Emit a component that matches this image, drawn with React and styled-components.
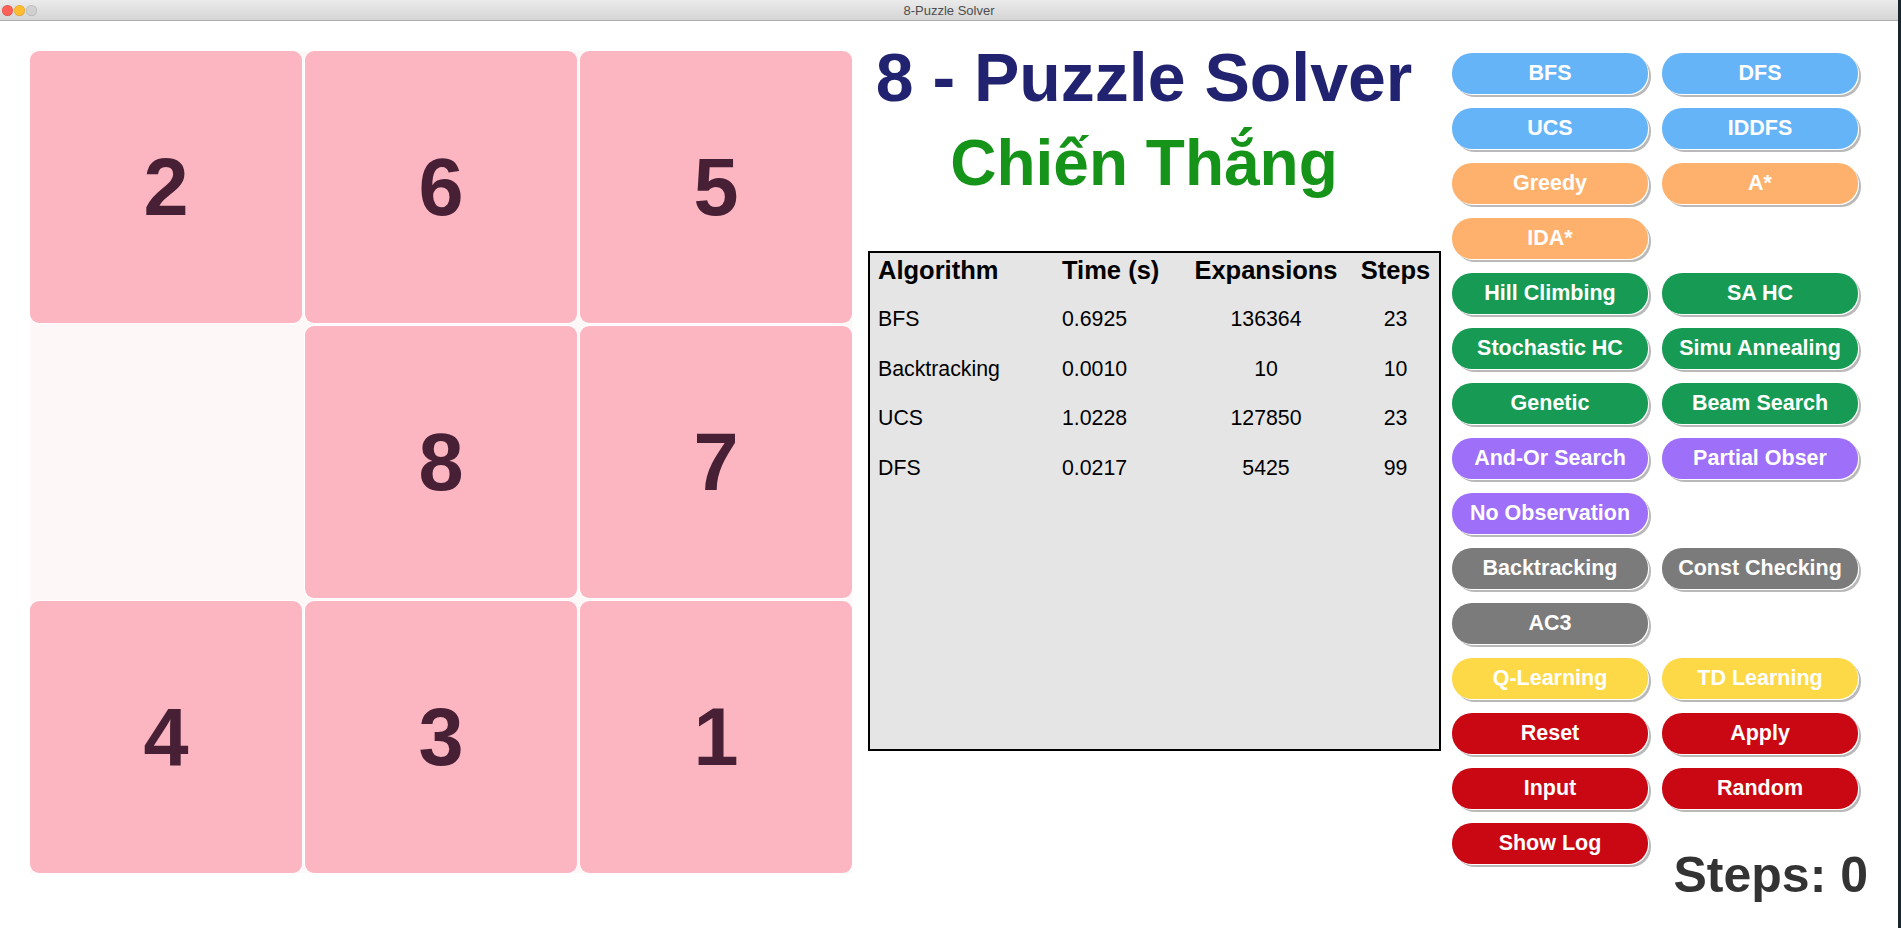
import styled, { createGlobalStyle } from "styled-components";

const GlobalStyle = createGlobalStyle`
  html, body {
    margin: 0;
    padding: 0;
    background: #17252d;
    font-family: "Liberation Sans", Arial, sans-serif;
    overflow: hidden;
  }
`;

const board = [2, 6, 5, 0, 8, 7, 4, 3, 1];

const results = [
  { name: "BFS", time: "0.6925", exp: "136364", steps: "23" },
  { name: "Backtracking", time: "0.0010", exp: "10", steps: "10" },
  { name: "UCS", time: "1.0228", exp: "127850", steps: "23" },
  { name: "DFS", time: "0.0217", exp: "5425", steps: "99" },
];

const colors = {
  blue: "#66b4f8",
  orange: "#fdb16d",
  green: "#179a53",
  purple: "#9e6ff9",
  gray: "#7b7b7b",
  yellow: "#fdd947",
  red: "#c90814",
};

const buttonRows = [
  [["BFS", "blue"], ["DFS", "blue"]],
  [["UCS", "blue"], ["IDDFS", "blue"]],
  [["Greedy", "orange"], ["A*", "orange"]],
  [["IDA*", "orange"]],
  [["Hill Climbing", "green"], ["SA HC", "green"]],
  [["Stochastic HC", "green"], ["Simu Annealing", "green"]],
  [["Genetic", "green"], ["Beam Search", "green"]],
  [["And-Or Search", "purple"], ["Partial Obser", "purple"]],
  [["No Observation", "purple"]],
  [["Backtracking", "gray"], ["Const Checking", "gray"]],
  [["AC3", "gray"]],
  [["Q-Learning", "yellow"], ["TD Learning", "yellow"]],
  [["Reset", "red"], ["Apply", "red"]],
  [["Input", "red"], ["Random", "red"]],
];

const Window = styled.div`
  width: 1898px;
  height: 928px;
  background: #fff;
  display: flex;
  flex-direction: column;
`;

const TitleBar = styled.div`
  height: 20px;
  flex-shrink: 0;
  background: linear-gradient(#ebebeb, #d5d5d5);
  border-bottom: 1px solid #adadad;
  display: flex;
  align-items: center;
  position: relative;
  padding-left: 2px;
  gap: 1px;
`;

const Light = styled.span`
  width: 11px;
  height: 11px;
  border-radius: 50%;
  background: ${(p) => p.$c};
  box-shadow: inset 0 0 0 0.5px rgba(0, 0, 0, 0.15);
`;

const WindowTitle = styled.div`
  position: absolute;
  left: 0;
  right: 0;
  text-align: center;
  font-size: 13px;
  color: #4d4d4d;
  pointer-events: none;
`;

const Content = styled.div`
  display: flex;
  align-items: flex-start;
`;

const Board = styled.div`
  margin: 30px 0 0 30px;
  display: grid;
  grid-template-columns: repeat(3, 272px);
  grid-auto-rows: 272px;
  gap: 3px;
  background: #fdf7f7;
`;

const Tile = styled.div`
  border-radius: 9px;
  background: ${(p) => (p.$empty ? "transparent" : "#fbb6c1")};
  box-shadow: ${(p) => (p.$empty ? "none" : "0 0 0 1px #fff")};
  display: flex;
  align-items: center;
  justify-content: center;
  font-size: 81px;
  font-weight: bold;
  color: #482036;
`;

const Middle = styled.div`
  margin-left: 16px;
  width: 573px;
  display: flex;
  flex-direction: column;
`;

const Heading = styled.h1`
  margin: 22px 0 0;
  width: 552px;
  text-align: center;
  font-size: 68px;
  line-height: 1;
  font-weight: bold;
  color: #222370;
`;

const Winner = styled.h2`
  margin: 20px 0 0;
  width: 552px;
  text-align: center;
  font-size: 64px;
  line-height: 1;
  font-weight: bold;
  color: #16941a;
`;

const Table = styled.div`
  margin-top: 56px;
  height: 496px;
  border: 2px solid #000;
  background: #e5e5e5;
  padding-left: 8px;
  display: grid;
  grid-template-columns: 184px 118px 172px 1fr;
  grid-template-rows: 42px repeat(4, 49.5px);
  align-content: start;
`;

const Cell = styled.div`
  display: flex;
  align-items: center;
  align-self: start;
  justify-content: ${(p) => (p.$center ? "center" : "flex-start")};
  white-space: nowrap;
  font-size: ${(p) => (p.$head ? "25.5px" : "21.3px")};
  font-weight: ${(p) => (p.$head ? "bold" : "normal")};
  color: #000;
  height: ${(p) => (p.$head ? "34px" : "49.5px")};
`;

const Side = styled.div`
  margin: 32px 0 0 11px;
  display: grid;
  grid-template-columns: 196px 196px;
  column-gap: 14px;
  row-gap: 14px;
  grid-auto-rows: 41px;
`;

const Button = styled.button`
  height: 41px;
  border: none;
  border-radius: 20px;
  background: ${(p) => colors[p.$tone]};
  color: #fff;
  font-family: "Liberation Sans", Arial, sans-serif;
  font-size: 21.5px;
  font-weight: bold;
  box-shadow: 1px 1px 0 #fff, 3px 3px 0 #b9b9b9;
  padding: 0;
  cursor: pointer;
`;

const Filler = styled.div``;

const Steps = styled.div`
  justify-self: end;
  align-self: start;
  margin: 27px -10px 0 0;
  white-space: nowrap;
  font-size: 50px;
  line-height: 1;
  font-weight: bold;
  color: #333;
`;

export default function App() {
  return (
    <>
      <GlobalStyle />
      <Window>
        <TitleBar>
          <Light $c="#fe5f57" />
          <Light $c="#febc2e" />
          <Light $c="#d0d0d0" />
          <WindowTitle>8-Puzzle Solver</WindowTitle>
        </TitleBar>
        <Content>
          <Board>
            {board.map((n, i) => (
              <Tile key={i} $empty={n === 0}>
                {n !== 0 ? n : ""}
              </Tile>
            ))}
          </Board>
          <Middle>
            <Heading>8 - Puzzle Solver</Heading>
            <Winner>Chiến Thắng</Winner>
            <Table>
              <Cell $head>Algorithm</Cell>
              <Cell $head>Time (s)</Cell>
              <Cell $head $center>Expansions</Cell>
              <Cell $head $center>Steps</Cell>
              {results.map((r) => [
                <Cell key={r.name + "n"}>{r.name}</Cell>,
                <Cell key={r.name + "t"}>{r.time}</Cell>,
                <Cell key={r.name + "e"} $center>{r.exp}</Cell>,
                <Cell key={r.name + "s"} $center>{r.steps}</Cell>,
              ])}
            </Table>
          </Middle>
          <Side>
            {buttonRows.map((row, i) => [
              ...row.map(([label, tone]) => (
                <Button key={label + tone} $tone={tone}>
                  {label}
                </Button>
              )),
              row.length === 1 ? <Filler key={"f" + i} /> : null,
            ])}
            <Button $tone="red">Show Log</Button>
            <Steps>Steps: 0</Steps>
          </Side>
        </Content>
      </Window>
    </>
  );
}
